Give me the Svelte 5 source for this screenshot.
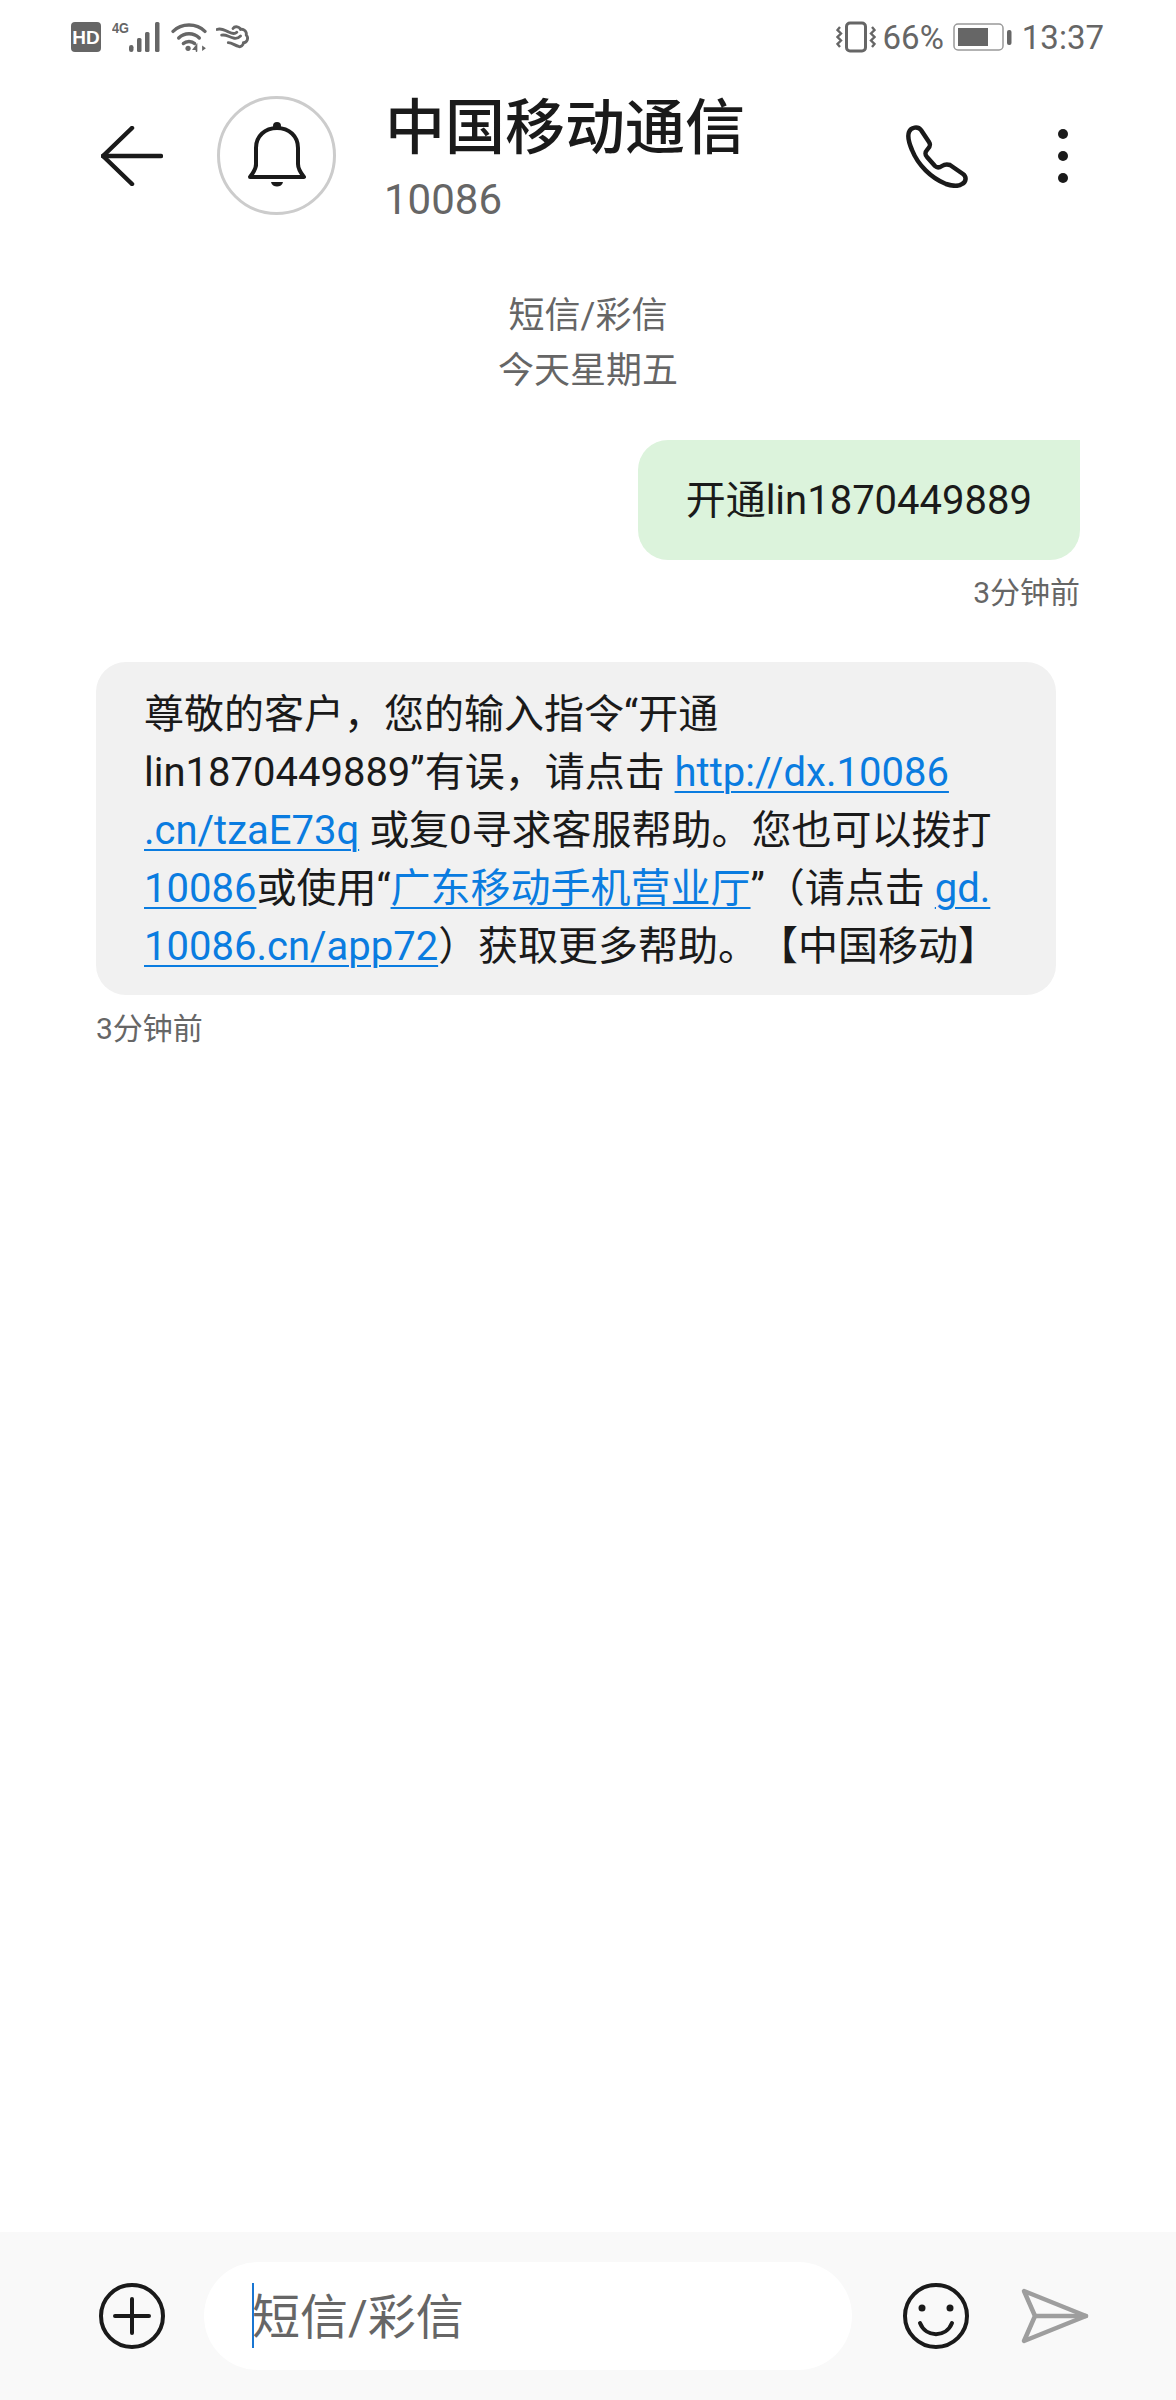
<script>
	const note = ["短信/彩信", "今天星期五"];
</script>

<div class="page">
	<div class="status">
		<div class="status-left">
			<svg width="30" height="30" viewBox="0 0 30 30">
				<rect width="30" height="30" rx="4" fill="#666" />
				<text x="15" y="21.500" text-anchor="middle" class="hd-text">HD</text>
			</svg>
			<svg class="signal" width="50" height="34" viewBox="0 -4 50 34">
				<text x="0" y="11" textLength="17" lengthAdjust="spacingAndGlyphs" class="g-text">4G</text>
				<rect x="17" y="23" width="4.500" height="7" rx="2.200" fill="#666" />
				<rect x="25" y="16" width="4.500" height="14" rx="1.500" fill="#666" />
				<rect x="33" y="10" width="4.500" height="20" rx="1.500" fill="#666" />
				<rect x="43" y="0" width="4.500" height="30" rx="1.500" fill="#666" />
			</svg>
			<svg width="36" height="30" viewBox="0 0 38 32" fill="none" stroke="#666" stroke-width="3.600" stroke-linecap="round">
				<path d="M2 10 C11 1 27 1 36 10" />
				<path d="M8 17 C14 11 24 11 30 17" />
				<path d="M13 23 C16 20 22 20 25 23" />
				<circle cx="18" cy="28" r="2.800" fill="#666" stroke="none" />
				<path d="M27 31 V25 L24 29 H27" stroke-width="1.800" />
				<path d="M33 25 V31 L37 28 Z" fill="#666" stroke="none" />
			</svg>
			<svg width="34" height="30" viewBox="0 0 36 30" fill="none" stroke="#666" stroke-width="3" stroke-linecap="round" stroke-linejoin="round">
				<path d="M1 7 C6 5 9 8 14 10 C18 12 20 12 22 10" />
				<path d="M6 13 C11 12 13 15 18 16 C21 17 24 16 26 14" />
				<path d="M13 21 C17 21 20 24 24 25 C26 26 29 24 29 21 C33 21 35 16 32 13 C33 9 29 6 26 7 C25 4 20 3 18 6" />
			</svg>
		</div>
		<div class="status-right">
			<svg class="vibrate" width="40" height="32" viewBox="0 0 40 32" fill="none" stroke="#666" stroke-width="3">
				<rect x="10.500" y="2" width="19" height="28" rx="3.500" />
				<path d="M4 6 L1.500 9 L5 12.500 L1.500 16 L5 19.500 L1.500 23 L4 26" stroke-width="2.400" />
				<path d="M36 6 L38.500 9 L35 12.500 L38.500 16 L35 19.500 L38.500 23 L36 26" stroke-width="2.400" />
			</svg>
			<span class="pct">66%</span>
			<svg class="battery" width="60" height="28" viewBox="0 0 60 28">
				<rect x="1" y="1" width="49" height="26" rx="4" fill="none" stroke="#999" stroke-width="1.500" />
				<rect x="5" y="5" width="30" height="18" fill="#666" />
				<rect x="54" y="7" width="4.500" height="15" rx="2" fill="#666" />
			</svg>
			<span class="clock">13:37</span>
		</div>
	</div>

	<header class="header">
		<svg class="back" width="62" height="60" viewBox="0 0 62 60" fill="none" stroke="#1a1a1a" stroke-width="4.500" stroke-linecap="round" stroke-linejoin="round">
			<path d="M31 2 L2 30 L31 58" />
			<path d="M2 30 H60" />
		</svg>
		<div class="avatar">
			<svg width="60" height="68" viewBox="0 0 60 68" fill="none" stroke="#1a1a1a" stroke-width="4" stroke-linejoin="round">
				<path d="M9 44 V26 C9 14 18 6 30 6 C42 6 51 14 51 26 V42 C51 47 53 50 57 55 H3 C7 50 9 47 9 42 Z" />
				<circle cx="30" cy="4" r="4" fill="#1a1a1a" stroke="none" />
				<path d="M24 60 H36 C35 66 25 66 24 60 Z" fill="#1a1a1a" stroke="none" />
			</svg>
		</div>
		<div class="who">
			<div class="name">中国移动通信</div>
			<div class="number">10086</div>
		</div>
		<svg class="phone" width="64" height="64" viewBox="0 0 64 64" fill="none" stroke="#1a1a1a" stroke-width="4.500" stroke-linejoin="round">
			<path d="M5 8 C7 3 14 2 17 6 L25 18 C27 21 26 23 23 26 C21 28 21 31 23 33 L31 42 C33 44 35 44 38 42 C41 40 43 40 46 41 L59 50 C63 53 62 58 58 60 C54 63 48 62 42 60 C27 54 14 41 8 26 C5 19 3 13 5 8 Z" />
		</svg>
		<div class="dots">
			<span></span><span></span><span></span>
		</div>
	</header>

	<main class="thread">
		<div class="note">
			{#each note as line}
				<div>{line}</div>
			{/each}
		</div>

		<div class="bubble sent">开通lin1870449889</div>
		<div class="time right">3分钟前</div>

		<div class="bubble received">
			尊敬的客户，您的输入指令“开通<br />
			lin1870449889”有误，请点击 <a href="#a">http://dx.10086<br />.cn/tzaE73q</a> 或复0寻求客服帮助。您也可以拨打<br />
			<a href="#a">10086</a>或使用“<a href="#a">广东移动手机营业厅</a>”（请点击 <a href="#a">gd.<br />10086.cn/app72</a>）获取更多帮助。【中国移动】
		</div>
		<div class="time received-time">3分钟前</div>
	</main>

	<footer class="composer">
		<svg width="66" height="66" viewBox="0 0 66 66" fill="none" stroke="#1a1a1a" stroke-width="4" stroke-linecap="round">
			<circle cx="33" cy="33" r="31" />
			<path d="M33 16 V50 M16 33 H50" />
		</svg>
		<div class="input">
			<span class="caret"></span>
			<span class="placeholder">短信/彩信</span>
		</div>
		<svg class="smile" width="68" height="68" viewBox="0 0 68 68" fill="none" stroke="#1a1a1a" stroke-width="4" stroke-linecap="round">
			<circle cx="34" cy="34" r="31" />
			<circle cx="20" cy="26" r="3.500" fill="#1a1a1a" stroke="none" />
			<circle cx="48" cy="26" r="3.500" fill="#1a1a1a" stroke="none" />
			<path d="M18 41 C24 56 44 56 50 41" />
		</svg>
		<svg class="send" width="68" height="56" viewBox="0 0 68 56" fill="none" stroke="#9e9e9e" stroke-width="4.500" stroke-linecap="round" stroke-linejoin="round">
			<path d="M3 3 L65 28 L3 53 L14 28 Z" />
			<path d="M14 28 H65" />
		</svg>
	</footer>
</div>

<style>
	:global(body) {
		background: #fff;
	}

	.page {
		display: flex;
		flex-direction: column;
		width: 1176px;
		height: 2400px;
		overflow: hidden;
		background: #fff;
		font-family: Roboto, "Noto Sans CJK SC", sans-serif;
		color: #1a1a1a;
		text-spacing-trim: space-all;
	}

	.status {
		display: flex;
		justify-content: space-between;
		align-items: center;
		height: 73px;
		padding: 0 72px 0 71px;
		color: #666;
		flex: none;
	}

	.status-left {
		display: flex;
		align-items: center;
		gap: 9px;
		height: 30px;
		margin-top: 1px;
	}

	.hd-text {
		font: 700 19px "Liberation Sans", sans-serif;
		fill: #fff;
	}

	.g-text {
		font: 700 15px "Liberation Sans", sans-serif;
		fill: #666;
	}

	.signal {
		margin: -4px 0 0 2px;
	}

	.status-right {
		display: flex;
		align-items: center;
		font-size: 33px;
		margin-top: 1px;
	}

	.pct {
		margin-left: 7px;
	}

	.battery {
		margin-left: 9px;
	}

	.clock {
		margin-left: 9px;
	}

	.header {
		display: flex;
		align-items: center;
		height: 165px;
		padding: 0 108px 0 101px;
		flex: none;
	}

	.avatar {
		display: flex;
		justify-content: center;
		align-items: center;
		box-sizing: border-box;
		width: 119px;
		height: 119px;
		margin-left: 54px;
		border: 3px solid #ccc;
		border-radius: 50%;
	}

	.who {
		flex: 1;
		align-self: flex-start;
		padding-top: 19px;
		margin-left: 49px;
	}

	.name {
		font-size: 60px;
		font-weight: 500;
		line-height: 74px;
	}

	.number {
		font-size: 42px;
		line-height: 50px;
		margin-top: 9px;
		margin-left: -1px;
		color: #666;
	}

	.phone {
		margin-right: 90px;
	}

	.dots {
		display: flex;
		flex-direction: column;
		gap: 12px;
	}

	.dots span {
		width: 10px;
		height: 10px;
		border-radius: 50%;
		background: #1a1a1a;
	}

	.thread {
		display: flex;
		flex-direction: column;
		flex: 1;
		padding: 0 96px;
	}

	.note {
		margin-top: 51px;
		font-size: 36px;
		line-height: 55px;
		text-align: center;
		color: #666;
	}

	.bubble {
		font-size: 40px;
		line-height: 58px;
	}

	.sent {
		align-self: flex-end;
		box-sizing: border-box;
		height: 120px;
		margin-top: 41px;
		padding: 32px 48px;
		background: #dcf3dc;
		border-radius: 30px 0 30px 30px;
	}

	.received {
		box-sizing: border-box;
		width: 960px;
		height: 333px;
		margin-top: 51px;
		padding: 24px 48px;
		background: #f1f1f1;
		border-radius: 30px;
		white-space: nowrap;
	}

	.received a {
		color: #0a7ce0;
		text-decoration: underline;
		text-decoration-thickness: 2px;
		text-underline-offset: 5px;
	}

	.time {
		margin-top: 15px;
		font-size: 30px;
		line-height: 36px;
		color: #666;
	}

	.time.right {
		text-align: right;
	}

	.received-time {
		margin-top: 16px;
	}

	.composer {
		display: flex;
		align-items: center;
		box-sizing: border-box;
		height: 168px;
		padding-left: 99px;
		background: #f9f9f9;
		flex: none;
	}

	.input {
		display: flex;
		align-items: center;
		flex: none;
		position: relative;
		box-sizing: border-box;
		width: 648px;
		height: 108px;
		margin-left: 39px;
		padding: 0 0 6px 48px;
		background: #fff;
		border-radius: 54px;
	}

	.caret {
		position: absolute;
		left: 48px;
		top: 21px;
		width: 2px;
		height: 65px;
		background: #1976d2;
	}

	.placeholder {
		font-size: 48px;
		color: #666;
	}

	.smile {
		margin-left: 50px;
	}

	.send {
		margin-left: 51px;
	}
</style>
